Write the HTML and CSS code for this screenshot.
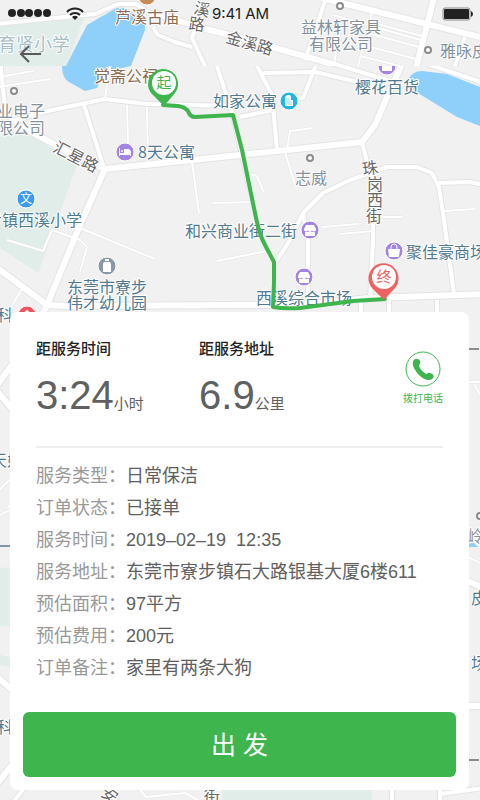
FILE: index.html
```html
<!DOCTYPE html>
<html lang="zh-CN">

<head>
  <meta charset="UTF-8" />
  <meta name="viewport" content="width=device-width, initial-scale=1.0" />
  <title>订单详情</title>
  <link rel="stylesheet" href="styles.css">
</head>

<body>
  <div class="screen">
    <svg class="map" viewBox="0 0 480 800" preserveAspectRatio="xMidYMin slice" aria-hidden="true">
      <defs>
        <clipPath id="clip-top"><rect width="480" height="66" /></clipPath>
        <clipPath id="clip-main"><rect y="66" width="480" height="734" /></clipPath>

        <g id="top-major">
          <path d="M322-2L480 37" />
          <path d="M153 13L206 29L240 38L325 62L345 68" />
          <path d="M434-2L416 68" />
        </g>
        <g id="top-minor">
          <path d="M-4 24L95 14L118 4L136 4L155 17" />
          <path d="M326-2L305 60" />
          <path d="M153 27L158 35L175 42L192 47" />
          <path d="M200 14L192 38L207 70" />
          <path d="M465 37L454 68" />
        </g>
        <g id="top-lane">
          <path d="M333 15L424 41M372 12L358 66M370 22L422 36M367 33L419 47M363 45L416 59M360 56L400 66" />
          <path d="M340 30L334 64" />
        </g>

        <g id="major">
          <path d="M-4 267L47 305L66 306L240 305L300 305L370 298L484 294" />
          <path d="M105 169L80 225L47 305L30 340L-4 387" />
          <path d="M30 131L70 153L105 169L240 155L362 142L375 125L387 97L402 64" />
          <path d="M-4 390L30 430M-4 676L30 705M-4 785L40 730" />
          <path d="M484 706L440 706M484 588L440 570" />
        </g>
        <g id="medium">
          <path d="M0 60L5 108L12 121L43 112L105 99L147 104L233 106" />
          <path d="M12 121L32 132M84 105L104 168M215 60L233 115L250 190" />
          <path d="M362 142L373 185L373 240L370 300" />
          <path d="M276 262L290 240L303 213L323 193L350 180L387 167L417 167L432 173L439 187L444 220L454 294" />
          <path d="M303 213L308 240L308 305" />
          <path d="M254 60L272 95L277 150M263 73L315 72L375 86" />
          <path d="M318 60L303 98L285 96M273 110L240 117M438 183L470 182L484 185" />
          <path d="M325 61L387 80M427 64L484 83" />
          <path d="M361 300V314M389 300V314M437 300V314M12 804L30 780M392 780V804M440 780V804M440 794L484 788" />
        </g>
        <g id="lane">
          <path d="M-2 77L33 71M-2 87L50 79M105 99L111 60M127 105L128 143M147 107L148 160" />
          <path d="M192 162L199 213M80 228L155 259M7 240L43 251L52 230L80 240L87 247L80 272" />
          <path d="M213 203L255 202M217 261L272 250M285 152L295 185M250 174L257 176L264 193" />
          <path d="M322 227L358 224M340 234L373 231M373 217L402 217M443 211L475 209" />
          <path d="M313 128L290 131L287 150M22 289L8 312M-2 491L30 460M-2 516L30 500M8 505L30 530" />
          <path d="M464 382H482M474 384L482 398M464 548V530M482 564L464 555" />
          <path d="M132 780L146 797L185 793L205 804M440 650L482 662" />
        </g>
      </defs>

      <rect class="land" width="480" height="800" />

      <g clip-path="url(#clip-top)">
        <path class="park" d="M0 24L85 15L66 66H0Z" />
        <path class="lake" d="M66 66L87 25L113 10Q118 6 127 9L145 20V30L131 66Z" />
        <use class="casing w-lane" href="#top-lane" />
        <use class="casing w-medium" href="#top-minor" />
        <use class="casing w-major" href="#top-major" />
        <use class="road w-lane" href="#top-lane" />
        <use class="road w-medium" href="#top-minor" />
        <use class="road w-major" href="#top-major" />
      </g>

      <g clip-path="url(#clip-main)">
        <path class="park" d="M0 130L28 133L77 165L38 273L0 248Z" />
        <path class="park" d="M0 568L30 566V626H0ZM0 655L30 662V672L0 665ZM222 788H372V800H222Z" />
        <path class="lake" d="M62 66Q62 78 69 82L85 91L97 88L104 72L131 66Z" />
        <path class="lake" d="M408 80Q412 71 422 71L447 74L480 87V126L457 117L413 90Z" />
        <path class="lake" d="M469 544L473 542L478 547H469Z" />
        <use class="casing w-lane" href="#lane" />
        <use class="casing w-medium" href="#medium" />
        <use class="casing w-major" href="#major" />
        <use class="road w-lane" href="#lane" />
        <use class="road w-medium" href="#medium" />
        <use class="road w-major" href="#major" />
        <path class="rail" d="M466 349H479M466 760H479" />
        <path class="metro" d="M0 546H12" />
      </g>

      <g class="poi-dot">
        <circle cx="340" cy="6" r="3" />
        <circle cx="428" cy="50" r="3" />
        <circle cx="14" cy="91" r="3" />
        <circle cx="310" cy="158" r="3" />
        <circle cx="480" cy="516" r="3" />
      </g>

      <!-- place markers -->
      <g clip-path="url(#clip-top)">
        <circle class="poi poi-brown" cx="147" cy="-4" r="9" />
        <path class="glyph-line" d="M142-1H152M144-4V0M150-4V0" />
      </g>
      <g clip-path="url(#clip-main)">
        <circle class="poi poi-purple" cx="387" cy="66" r="9" />
        <path class="glyph" d="M382 65h10v6h-10z" />
      </g>
      <circle class="poi poi-cyan" cx="289" cy="101" r="9" />
      <path class="glyph" d="M285 106V97L287 95H290L291 97V100H293V106Z" />
      <path class="slit" d="M287 98V105M289 98V105M291 101V105" />
      <circle class="poi poi-purple" cx="125" cy="152" r="9" />
      <path class="glyph" d="M119 148h1v5h11v3h-1v-1h-10v1h-1zM124 149h5l2 2v2h-7z" />
      <circle class="glyph" cx="122" cy="151" r="1" />
      <circle class="poi poi-blue" cx="26" cy="199" r="9" />
      <text class="poi-text" x="26" y="203">文</text>
      <circle class="poi poi-gray" cx="107" cy="266" r="9" />
      <path class="glyph" d="M105 259h4v2h-4zM104 262h6l1 2v8h-8v-8z" />
      <circle class="poi poi-purple" cx="310" cy="230" r="9" />
      <path class="glyph" d="M306 225h8l2 4a2 2 0 0 1-4 1a2 2 0 0 1-4 0a2 2 0 0 1-4-1zM305 232h10v4h-10z" />
      <circle class="poi poi-purple" cx="304" cy="277" r="9" />
      <path class="glyph" d="M300 272h8l2 4a2 2 0 0 1-4 1a2 2 0 0 1-4 0a2 2 0 0 1-4-1zM299 279h10v4h-10z" />
      <circle class="poi poi-purple" cx="394" cy="251" r="9" />
      <path class="glyph" d="M388 249h12l-1 8h-10z" />
      <path class="glyph-line" d="M391 250V247a3 3 0 0 1 6 0V250" />
      <circle class="poi poi-red" cx="27" cy="315" r="9" />
      <path class="glyph" d="M22 314l5-4l5 4v4h-10z" />

      <!-- place names -->
      <g class="names">
        <text class="faint" x="-2" y="51">育贤小学</text>
        <text class="brown" x="115" y="23">芦溪古庙</text>
        <text class="brown" x="94" y="82">觉斋公祠</text>
        <g class="muted">
          <text x="301" y="33">益林轩家具</text>
          <text x="309" y="50">有限公司</text>
          <text x="440" y="57">雅咏皮具</text>
          <text x="-3" y="117">业电子</text>
          <text x="-3" y="134">限公司</text>
          <text x="295" y="184">志威</text>
          <text x="467" y="542">岭</text>
        </g>
        <g class="blue">
          <text x="213" y="107">如家公寓</text>
          <text x="355" y="93">樱花百货</text>
          <text x="138" y="158">8天公寓</text>
          <text x="-14" y="226">步镇西溪小学</text>
          <text x="185" y="237">和兴商业街二街</text>
          <text x="406" y="258">聚佳豪商场</text>
          <text x="67" y="293">东莞市寮步</text>
          <text x="67" y="309">伟才幼儿园</text>
          <text x="256" y="304">西溪综合市场</text>
          <text x="-3" y="321">科</text>
          <text x="-9" y="466">天娇</text>
          <text x="-3" y="733">科</text>
          <text x="471" y="604">皮</text>
          <text x="471" y="669">场</text>
        </g>
        <g class="street">
          <text transform="translate(193 13) rotate(14)">溪</text>
          <text transform="translate(188 29) rotate(8)">路</text>
          <text transform="translate(225 42) rotate(16)">金溪路</text>
          <text transform="translate(52 151) rotate(27)">汇星路</text>
          <text x="362" y="174" transform="rotate(-8 370 168)">珠</text>
          <text x="367" y="190">岗</text>
          <text x="367" y="206">西</text>
          <text x="366" y="222">街</text>
          <text transform="translate(100 795) rotate(35)">安</text>
          <text x="204" y="802">街</text>
        </g>
      </g>

      <!-- route with start and end pins -->
      <path class="route" d="M163 105L178 106Q185 107 188 111Q190 117 195 117L233 115L242 150L255 213Q259 234 265 245L274 262V283L273 307Q284 309 300 308Q330 304 353 301L385 299" />
      <path class="pin-start" d="M164 106L152 94A15 15 0 1 1 175 93Z" />
      <circle class="pin-face" cx="164" cy="83" r="12" />
      <text class="pin-text pin-start" x="164" y="88">起</text>
      <path class="pin-end" d="M384 300L372 288A15 15 0 1 1 395 288Z" />
      <circle class="pin-face" cx="384" cy="277" r="12" />
      <text class="pin-text pin-end" x="384" y="282">终</text>
    </svg>

    <header class="top">
      <div class="status">
        <div class="signal">
          <svg width="43" height="9" viewBox="0 0 43 9" aria-hidden="true">
            <circle cx="4" cy="4" r="4" />
            <circle cx="13" cy="4" r="4" />
            <circle cx="21" cy="4" r="4" />
            <circle cx="30" cy="4" r="4" />
            <circle cx="39" cy="4" r="4" />
          </svg>
          <svg class="wifi" width="18" height="13" viewBox="0 0 18 13" aria-hidden="true">
            <path d="M1 5a11 11 0 0 1 16 0M4 8a7 7 0 0 1 10 0" />
            <path class="wifi-tip" d="M6 10a4 4 0 0 1 6 0l-3 3z" />
          </svg>
        </div>
        <time>9:41 AM</time>
        <svg class="battery" width="31" height="14" viewBox="0 0 31 14" aria-hidden="true">
          <rect class="battery-case" x="1" y="1" width="27" height="12" rx="2" />
          <rect x="2" y="2" width="25" height="10" rx="1" />
          <path d="M29 4q2 1 2 3t-2 3z" />
        </svg>
      </div>
      <button class="back" type="button" aria-label="返回">
        <svg width="24" height="20" viewBox="0 0 24 20" aria-hidden="true">
          <path d="M11 2L3 10L11 18M3 10H23" />
        </svg>
      </button>
    </header>

    <main class="card">
      <section class="summary">
        <div>
          <h2>距服务时间</h2>
          <p class="value">3:24<span>小时</span></p>
        </div>
        <div>
          <h2>距服务地址</h2>
          <p class="value">6.9<span>公里</span></p>
        </div>
        <button class="call" type="button">
          <svg width="36" height="36" viewBox="0 0 36 36" aria-hidden="true">
            <circle cx="18" cy="18" r="17" />
            <path d="M8 11C8 8 13 6 15 10C16 12 14 14 14 15C15 18 18 21 21 23C22 23 23 21 25 22C29 23 30 26 27 28C23 31 17 27 13 23C10 19 7 15 8 11Z" />
          </svg>
          拨打电话
        </button>
      </section>

      <dl class="details">
        <dt>服务类型：</dt>
        <dd>日常保洁</dd>
        <dt>订单状态：</dt>
        <dd>已接单</dd>
        <dt>服务时间：</dt>
        <dd>2019–02–19&nbsp; 12:35</dd>
        <dt>服务地址：</dt>
        <dd>东莞市寮步镇石大路银基大厦6楼611</dd>
        <dt>预估面积：</dt>
        <dd>97平方</dd>
        <dt>预估费用：</dt>
        <dd>200元</dd>
        <dt>订单备注：</dt>
        <dd>家里有两条大狗</dd>
      </dl>

      <button class="go" type="button">出 发</button>
    </main>
  </div>
</body>

</html>
```

FILE: styles.css
```css
* {
  box-sizing: border-box;
}

body {
  margin: 0;
  background: #f1f1f1;
  color: #606060;
  font-family: "Liberation Sans", "Noto Sans CJK SC", sans-serif;
}

button {
  border: 0;
  padding: 0;
  background: none;
  font-family: inherit;
  cursor: pointer;
}

.screen {
  position: relative;
  display: flex;
  flex-direction: column;
  min-height: 100vh;
  overflow: hidden;
}

/* map */
.map {
  position: absolute;
  top: 0;
  left: 0;
  width: 100%;
  height: 100%;
  font-family: "Noto Sans CJK SC", sans-serif;
}

.land {
  fill: #f1f1f1;
}

.park {
  fill: #e1ede9;
}

.lake {
  fill: #8ed0fa;
}

.casing,
.road {
  fill: none;
  stroke: #fff;
  stroke-linejoin: round;
}

.casing {
  stroke: #e4e4e4;
}

.road.w-lane {
  stroke-width: 2px;
}

.casing.w-lane {
  stroke-width: 3px;
}

.road.w-medium {
  stroke-width: 4px;
}

.casing.w-medium {
  stroke-width: 6px;
}

.road.w-major {
  stroke-width: 6px;
}

.casing.w-major {
  stroke-width: 8px;
}

.rail {
  stroke: #8c8c8c;
  stroke-width: 2px;
}

.metro {
  stroke: #7d97a8;
  stroke-width: 2px;
}

.poi-dot {
  fill: #fff;
  stroke: #8b8b8b;
  stroke-width: 2px;
}

.poi {
  stroke: #fff;
  stroke-width: 1px;
}

.poi-brown {
  fill: #c58c58;
}

.poi-purple {
  fill: #a283e6;
}

.poi-cyan {
  fill: #22b5e8;
}

.poi-blue {
  fill: #3d9af0;
}

.poi-gray {
  fill: #8b97a9;
}

.poi-red {
  fill: #ef5560;
}

.glyph {
  fill: #fff;
}

.glyph-line {
  fill: none;
  stroke: #fff;
  stroke-width: 1px;
}

.slit {
  stroke: #8cd8f2;
  stroke-width: 1px;
}

.poi-text {
  fill: #fff;
  font-size: 12px;
  text-anchor: middle;
}

.names {
  font-size: 16px;
  stroke: #fff;
  stroke-width: 2px;
  stroke-linejoin: round;
  paint-order: stroke;
}

.faint {
  fill: #a9bec4;
  font-size: 18px;
}

.brown {
  fill: #8f6c50;
}

.muted {
  fill: #84919a;
}

.blue {
  fill: #507a90;
}

.street {
  fill: #666;
}

.route {
  fill: none;
  stroke: #3eb54d;
  stroke-width: 4px;
  stroke-linejoin: round;
  stroke-linecap: round;
}

.pin-start {
  fill: #3eb54d;
}

.pin-end {
  fill: #ef6262;
}

.pin-face {
  fill: #fff;
}

.pin-text {
  font-size: 15px;
  text-anchor: middle;
}

/* status bar and back button */
.top {
  position: relative;
}

.status {
  display: grid;
  grid-template-columns: 1fr auto 1fr;
  align-items: center;
  height: 27px;
  padding: 0 7px 0 8px;
  color: #222;
  fill: #222;
}

.signal {
  display: flex;
  align-items: center;
  gap: 15px;
}

.wifi {
  fill: none;
  stroke: #222;
  stroke-width: 2px;
}

.wifi-tip {
  fill: #222;
  stroke: none;
}

.status time {
  font-family: Inter, sans-serif;
  font-size: 15px;
  line-height: 27px;
}

.battery {
  justify-self: end;
}

.battery-case {
  fill: none;
  stroke: #888;
}

.back {
  display: block;
  margin-left: 18px;
  padding: 17px 0 0;
}

.back svg {
  display: block;
  fill: none;
  stroke: #595959;
  stroke-width: 2px;
}

/* order card */
.card {
  position: relative;
  margin: auto 11px 10px 10px;
  padding: 25px 13px 13px;
  border-radius: 8px;
  background: #fff;
}

.summary {
  display: grid;
  grid-template-columns: 4fr 5fr auto;
  margin: 0 13px;
  padding-bottom: 27px;
  border-bottom: 2px solid #eee;
}

.summary h2 {
  margin: 0 0 10px;
  color: #222;
  font-size: 15px;
  font-weight: 500;
  line-height: 24px;
}

.value {
  margin: 0;
  font-size: 40px;
  line-height: 48px;
}

.value span {
  font-size: 15px;
  line-height: 16px;
}

.call {
  display: flex;
  flex-direction: column;
  align-items: center;
  align-self: start;
  gap: 4px;
  padding-top: 14px;
  color: #3eb54d;
  font-size: 10px;
  line-height: 16px;
}

.call circle {
  fill: none;
  stroke: #3eb54d;
}

.call path {
  fill: #3eb54d;
}

.details {
  display: grid;
  grid-template-columns: auto 1fr;
  margin: 0 13px 28px;
  padding-top: 12px;
  font-size: 18px;
  line-height: 32px;
}

.details dt {
  color: #999;
}

.details dd {
  margin: 0;
}

.go {
  display: block;
  width: 100%;
  padding: 13px 0 12px;
  border-radius: 6px;
  background: #3eb54d;
  color: #fff;
  font-size: 25px;
  line-height: 40px;
}
```
